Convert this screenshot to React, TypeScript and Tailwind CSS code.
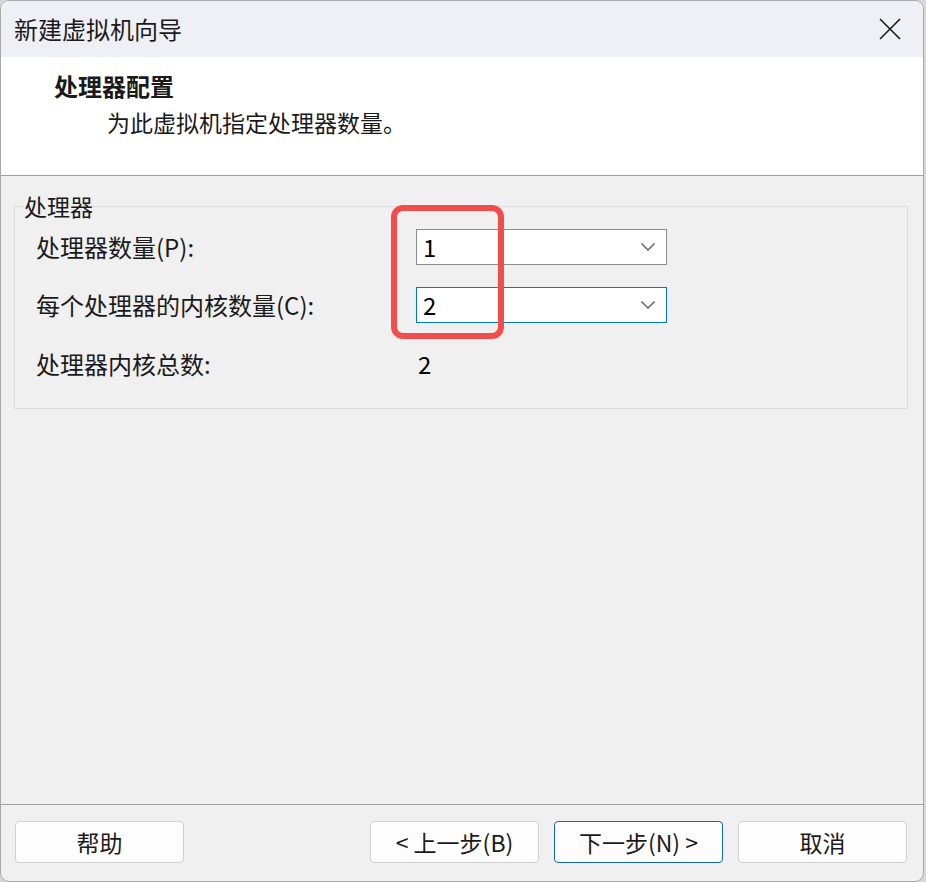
import React from "react";

const font = { fontFamily: '"Noto Sans CJK SC", "Noto Sans", sans-serif' };

function Chevron() {
  return (
    <svg width="16" height="10" viewBox="0 0 16 10" className="shrink-0">
      <path d="M1.5 1.5 L8 8 L14.5 1.5" fill="none" stroke="#5a5a5a" strokeWidth="1.3" />
    </svg>
  );
}

function Select({ value, focused }: { value: string; focused?: boolean }) {
  return (
    <div
      className={
        "w-[251px] h-[36px] bg-white flex items-center justify-between pl-[6px] pr-[10px] border " +
        (focused ? "border-[#0078d7]" : "border-[#8c8c8c]")
      }
    >
      <span className="text-[24px] leading-none text-black">{value}</span>
      <Chevron />
    </div>
  );
}

function Btn({ children, primary }: { children: React.ReactNode; primary?: boolean }) {
  return (
    <div
      className={
        "w-[169px] h-[42px] rounded-[4px] bg-[#fdfdfd] flex items-center justify-center text-[23px] text-[#1a1a1a] border " +
        (primary ? "border-[#1066b8]" : "border-[#d0d0d0]")
      }
    >
      {children}
    </div>
  );
}

export default function App() {
  return (
    <div className="w-[926px] h-[882px] bg-[#d8d8d8]" style={font}>
      <div className="w-[924px] h-[882px] bg-[#f0f0f0] border border-[#a9a9a9] rounded-[9px] overflow-hidden flex flex-col text-[#1a1a1a]">
        {/* title bar */}
        <div className="h-[56px] shrink-0 bg-[#eff0f6] flex items-center justify-between pl-[13px] pr-[22px]">
          <span className="text-[24px] leading-none">新建虚拟机向导</span>
          <svg width="22" height="22" viewBox="0 0 22 22">
            <path d="M1 1 L21 21 M21 1 L1 21" stroke="#1a1a1a" strokeWidth="1.6" fill="none" />
          </svg>
        </div>
        {/* header */}
        <div className="h-[119px] shrink-0 bg-white border-b border-[#a0a0a0] flex flex-col pl-[53px] pt-[15px]">
          <span className="text-[24px] leading-[28px] font-bold">处理器配置</span>
          <span className="text-[23px] leading-[28px] pl-[53px] mt-[8px]">为此虚拟机指定处理器数量。</span>
        </div>
        {/* body */}
        <div className="flex-1 flex flex-col pl-[13px] pr-[15px] pt-[30px]">
          <div className="relative h-[203px] border border-[#dcdcdc] flex flex-col pl-[21px] pt-[22px]">
            <span className="absolute left-[9px] top-[-14px] bg-[#f0f0f0] text-[23px] leading-[26px]">处理器</span>
            <div className="flex items-center h-[36px]">
              <span className="w-[380px] text-[24px] leading-none">处理器数量(P):</span>
              <Select value="1" />
            </div>
            <div className="flex items-center h-[36px] mt-[22px]">
              <span className="w-[380px] text-[24px] leading-none">每个处理器的内核数量(C):</span>
              <Select value="2" focused />
            </div>
            <div className="flex items-center h-[36px] mt-[23px]">
              <span className="w-[382px] text-[24px] leading-none">处理器内核总数:</span>
              <span className="text-[24px] leading-none text-black">2</span>
            </div>
            <div className="absolute left-[376px] top-[-2px] w-[113px] h-[134px] border-[6px] border-[#f34c4c] rounded-[12px]" />
          </div>
        </div>
        {/* footer */}
        <div className="h-[77px] shrink-0 border-t border-[#a0a0a0] flex items-start pt-[16px] pl-[14px] pr-[16px]">
          <Btn>帮助</Btn>
          <div className="flex-1" />
          <div className="flex gap-[15px]">
            <Btn>&lt; 上一步(B)</Btn>
            <Btn primary>下一步(N) &gt;</Btn>
            <Btn>取消</Btn>
          </div>
        </div>
      </div>
    </div>
  );
}
